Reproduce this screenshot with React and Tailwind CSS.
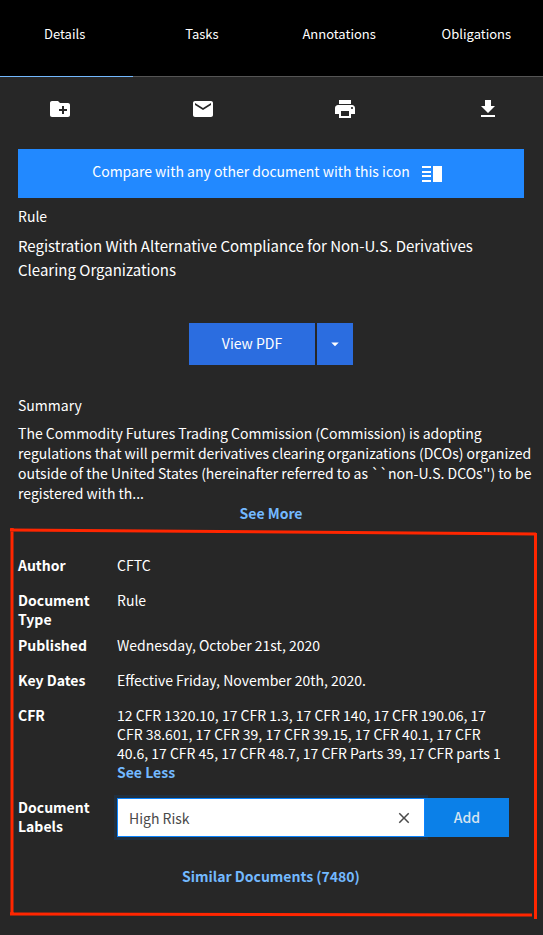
import { useState } from "react";
import { MdCreateNewFolder, MdEmail, MdPrint, MdArrowDropDown, MdClose } from "react-icons/md";

const tabs = ["Details", "Tasks", "Annotations", "Obligations"];

function DownloadIcon() {
  return (
    <svg viewBox="0 0 24 24" width="24" height="24" fill="currentColor" aria-hidden="true">
      <path d="M19 9h-4V3H9v6H5l7 7 7-7zM5 18v2h14v-2H5z" />
    </svg>
  );
}

function CompareIcon() {
  return (
    <svg viewBox="0 0 20 16" width="20" height="16" fill="currentColor" aria-hidden="true">
      <path d="M0 0h9v2H0zM0 5h9v2H0zM0 9h9v2H0zM0 14h9v2H0zM11 0h9v16h-9z" />
    </svg>
  );
}

function Row({ label, children }) {
  return (
    <div className="flex">
      <dt className="mb-[7px] w-[99px] shrink-0 pr-6 font-bold">{label}</dt>
      <dd className="flex-1 pr-4 pb-4">{children}</dd>
    </div>
  );
}

export default function App() {
  const [active, setActive] = useState("Details");
  const [value, setValue] = useState("High Risk");
  return (
    <div className="min-h-screen bg-[#272727] font-['Noto_Sans_CJK_SC','Noto_Sans',sans-serif] text-[14px] leading-[19px] text-white">
      <nav className="overflow-hidden bg-black">
        <div className="-mr-0.5 -ml-1 grid grid-cols-4">
          {tabs.map((t) => (
            <button
              key={t}
              type="button"
              onClick={() => setActive(t)}
              className={`h-[77px] border-b pb-2.5 text-[13px] ${t === active ? "border-[#73b9ff]" : "border-[#555]"}`}
            >
              {t}
            </button>
          ))}
        </div>
      </nav>

      <main className="pr-[19px] pb-4 pl-[18px]">
        <div className="flex h-[72px] items-center justify-between pr-6 pb-2 pl-[30px]">
          <button type="button" aria-label="Add to folder"><MdCreateNewFolder size={24} /></button>
          <button type="button" aria-label="Email"><MdEmail size={24} /></button>
          <button type="button" aria-label="Print"><MdPrint size={24} /></button>
          <button type="button" aria-label="Download"><DownloadIcon /></button>
        </div>

        <button type="button" className="flex h-[49px] w-full items-center justify-center gap-3 bg-[#2289ff] pr-2">
          <span className="pb-1">Compare with any other document with this icon</span>
          <CompareIcon />
        </button>

        <p className="mt-[9px]">Rule</p>
        <h1 className="mt-2 text-[15px] leading-6">
          Registration With Alternative Compliance for Non-U.S. Derivatives Clearing Organizations
        </h1>

        <div className="mt-[41px] flex justify-center gap-0.5">
          <button type="button" className="h-[42px] w-[126px] bg-[#2b6de0] pb-0.5">View PDF</button>
          <button type="button" aria-label="More options" className="flex h-[42px] w-9 items-center justify-center bg-[#2b6de0]">
            <MdArrowDropDown size={18} />
          </button>
        </div>

        <h2 className="mt-[31px]">Summary</h2>
        <p className="-mr-3 mt-2 leading-5">
          The Commodity Futures Trading Commission (Commission) is adopting
          <br />
          regulations that will permit derivatives clearing organizations (DCOs) organized outside of the United States
          (hereinafter referred to as ``non-U.S. DCOs'') to be registered with th...
        </p>
        <div className="text-center leading-5">
          <a href="#more" className="font-bold text-[#73b9ff]">See More</a>
        </div>

        <section className="relative -mr-[19px] -ml-[18px] mt-[5px] pt-7 pr-[19px] pb-[34px] pl-[18px]">
          <svg
            className="pointer-events-none absolute inset-0 h-full w-full"
            viewBox="0 0 543 392"
            preserveAspectRatio="none"
            fill="none"
            stroke="#ff2600"
            strokeWidth="3"
            aria-hidden="true"
          >
            <path d="M12 0V387M10 2L536 6M535.5 5V391M10 386L532 387" />
          </svg>
          <dl>
            <Row label="Author">CFTC</Row>
            <Row label="Document Type">Rule</Row>
            <Row label="Published">Wednesday, October 21st, 2020</Row>
            <Row label="Key Dates">Effective Friday, November 20th, 2020.</Row>
            <Row label="CFR">
              12 CFR 1320.10, 17 CFR 1.3, 17 CFR 140, 17 CFR 190.06, 17 CFR 38.601, 17 CFR 39, 17 CFR 39.15, 17 CFR
              40.1, 17 CFR 40.6, 17 CFR 45, 17 CFR 48.7, 17 CFR Parts 39, 17 CFR parts 1
              <br />
              <a href="#less" className="font-bold text-[#73b9ff]">See Less</a>
            </Row>
          </dl>
          <form className="flex" onSubmit={(e) => e.preventDefault()}>
            <label htmlFor="labels" className="w-[99px] shrink-0 pr-6 font-bold">Document Labels</label>
            <div className="mr-[15px] flex h-[39px] flex-1">
              <div className="flex flex-1 items-center border border-[#0a84ff] bg-white text-[#4a4a4a] shadow-[0_0_0_3px_#212f3e]">
                <input
                  id="labels"
                  value={value}
                  onChange={(e) => setValue(e.target.value)}
                  className="h-full w-0 flex-1 bg-transparent pl-[11px] outline-none"
                />
                <button type="button" aria-label="Clear" onClick={() => setValue("")} className="mr-[11px]">
                  <MdClose size={18} />
                </button>
              </div>
              <button type="submit" className="relative w-[84px] bg-[#0b80e8] font-medium text-[#d5e4f0]">Add</button>
            </div>
          </form>
          <div className="mt-[30px] text-center">
            <a href="#similar" className="font-bold text-[#73b9ff]">Similar Documents (7480)</a>
          </div>
        </section>
      </main>
    </div>
  );
}
